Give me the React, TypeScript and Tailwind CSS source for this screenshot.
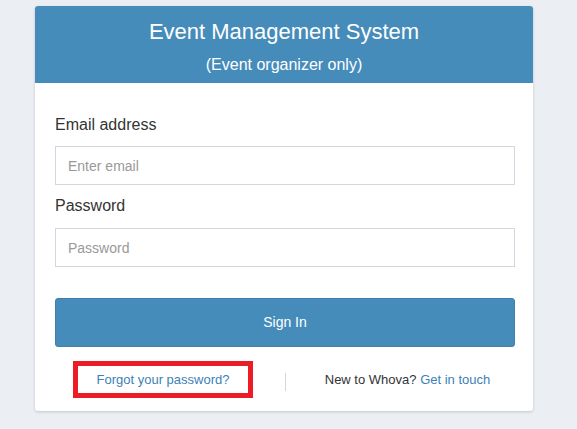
import React from "react";

const App: React.FC = () => {
  return (
    <div
      className="min-h-[429px] w-full bg-[#ebeef3] pt-[6px]"
      style={{ fontFamily: '"Liberation Sans", Arial, sans-serif' }}
    >
      <div className="ml-[35px] w-[498px] bg-white rounded-[3px] shadow-[0_1px_3px_rgba(0,0,0,0.18)] overflow-hidden">
        {/* Header */}
        <div className="bg-[#468cbb] h-[77px] flex flex-col items-center text-white">
          <h1 className="text-[22px] leading-[26px] mt-[13px]">Event Management System</h1>
          <p className="text-[16px] leading-[20px] mt-[10px]">(Event organizer only)</p>
        </div>

        {/* Form */}
        <div className="pl-[20px] pr-[18px] pt-[31px] pb-[13px]">
          <label className="block text-[16px] leading-[22px] text-[#333]">Email address</label>
          <input
            type="email"
            placeholder="Enter email"
            className="mt-[10px] block w-full h-[39px] px-[12px] border border-[#d3d6de] text-[14px] text-[#555] placeholder:text-[#999] outline-none"
          />
          <label className="block mt-[10px] text-[16px] leading-[22px] text-[#333]">Password</label>
          <input
            type="password"
            placeholder="Password"
            className="mt-[11px] block w-full h-[39px] px-[12px] border border-[#d3d6de] text-[14px] text-[#555] placeholder:text-[#999] outline-none"
          />
          <button className="mt-[31px] block w-full h-[49px] rounded-[3px] bg-[#468cbb] border border-[#3f80ab] text-white text-[14px]">
            Sign In
          </button>

          {/* Footer links */}
          <div className="mt-[14px] flex items-center">
            <div className="w-[230px] pr-[14px] flex justify-center">
              <a
                href="#"
                className="border-[5px] border-[#ec1c24] w-[180px] h-[37px] flex items-center justify-center text-[13px] text-[#3d7fb6]"
              >
                Forgot your password?
              </a>
            </div>
            <div className="w-px h-[18px] mt-[5px] bg-[#d3d6de]" />
            <div className="flex-1 flex justify-center pl-[14px] text-[13px] text-[#333]">
              <span>
                New to Whova? <a href="#" className="text-[#3d7fb6]">Get in touch</a>
              </span>
            </div>
          </div>
        </div>
      </div>
    </div>
  );
};

export default App;
